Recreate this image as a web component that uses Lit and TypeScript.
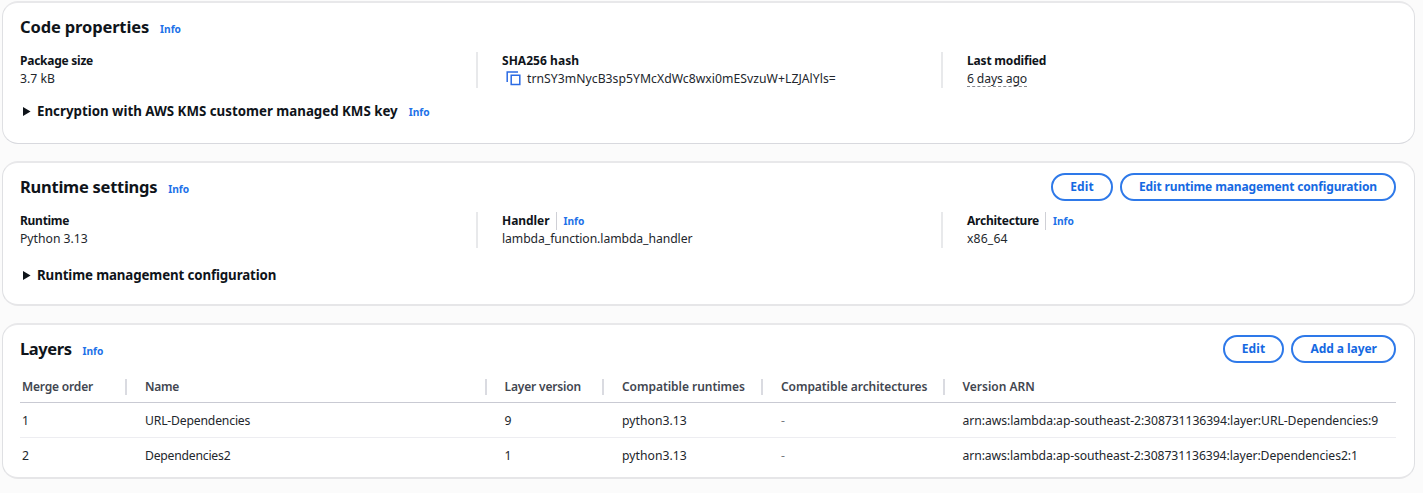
import { LitElement, html, css, nothing } from "lit";
import { customElement } from "lit/decorators.js";
import { classMap } from "lit/directives/class-map.js";
import { styleMap } from "lit/directives/style-map.js";

/** A string with the letter spacing (in px) it is set with. */
type Label = [text: string, tracking: number];

interface Field {
  label: Label;
  value: Label;
  info?: boolean;
  copy?: boolean;
  relative?: boolean;
}

interface Panel {
  id: string;
  title: Label;
  buttons: Label[];
  fields?: Field[];
  expander?: { label: Label; info?: boolean };
  table?: { head: Label[]; rows: Label[][] };
}

const EDIT: Label = ["Edit", 0.1];

const PANELS: Panel[] = [
  {
    id: "code",
    title: ["Code properties", -0.14],
    buttons: [],
    fields: [
      { label: ["Package size", -0.25], value: ["3.7 kB", 0] },
      {
        label: ["SHA256 hash", 0.04],
        value: ["trnSY3mNycB3sp5YMcXdWc8wxi0mESvzuW+LZJAlYls=", 0.04],
        copy: true,
      },
      { label: ["Last modified", -0.18], value: ["6 days ago", -0.14], relative: true },
    ],
    expander: { label: ["Encryption with AWS KMS customer managed KMS key", 0], info: true },
  },
  {
    id: "runtime",
    title: ["Runtime settings", -0.26],
    buttons: [EDIT, ["Edit runtime management configuration", -0.14]],
    fields: [
      { label: ["Runtime", -0.28], value: ["Python 3.13", 0] },
      {
        label: ["Handler", -0.05],
        value: ["lambda_function.lambda_handler", -0.07],
        info: true,
      },
      { label: ["Architecture", -0.24], value: ["x86_64", 0.15], info: true },
    ],
    expander: { label: ["Runtime management configuration", -0.12] },
  },
  {
    id: "layers",
    title: ["Layers", -0.42],
    buttons: [EDIT, ["Add a layer", -0.05]],
    table: {
      head: [
        ["Merge order", -0.18],
        ["Name", -0.25],
        ["Layer version", -0.16],
        ["Compatible runtimes", -0.04],
        ["Compatible architectures", -0.06],
        ["Version ARN", -0.02],
      ],
      rows: [
        [
          ["1", 0],
          ["URL-Dependencies", -0.18],
          ["9", 0],
          ["python3.13", 0.04],
          ["-", 0],
          ["arn:aws:lambda:ap-southeast-2:308731136394:layer:URL-Dependencies:9", -0.07],
        ],
        [
          ["2", 0],
          ["Dependencies2", -0.22],
          ["1", 0],
          ["python3.13", 0.04],
          ["-", 0],
          ["arn:aws:lambda:ap-southeast-2:308731136394:layer:Dependencies2:1", -0.08],
        ],
      ],
    },
  },
];

const tracked = ([text, tracking]: Label) =>
  html`<span style=${styleMap({ letterSpacing: `${tracking}px` })}>${text}</span>`;

const info = html`<a class="info">Info</a>`;

const copyIcon = html`<svg class="copy" width="15" height="15" viewBox="0 0 15 15" fill="none">
  <path d="M1.2 11V.9H12" />
  <path d="M5.2 4.2h8.6v9.2H5.2z" />
</svg>`;

@customElement("app-root")
export class AppRoot extends LitElement {
  static styles = css`
    :host {
      display: flex;
      flex-direction: column;
      box-sizing: border-box;
      height: 493px;
      padding: 1px 8px 0 2px;
      background: #fbfbfb;
      color: #0f141a;
      font-family: "Noto Sans", sans-serif;
      font-size: 12.2px;
      line-height: 18px;
      white-space: nowrap;
      overflow: hidden;
    }
    .panel {
      box-sizing: border-box;
      padding: 10px 18px 0 17px;
      background: #fff;
      border: solid #dfe0e3;
      border-width: 2px 1px;
      border-top-color: #e8e8ea;
      border-bottom-color: #e6e6e8;
      border-radius: 16px;
    }
    .code {
      height: 143px;
      margin-bottom: 17px;
      border-bottom: 1px solid #d8d9de;
    }
    .runtime {
      height: 145px;
      margin-bottom: 17px;
    }
    .layers {
      height: 156px;
    }
    .header {
      display: flex;
      align-items: center;
      justify-content: space-between;
      height: 28px;
    }
    .heading {
      display: flex;
      align-items: baseline;
      gap: 11px;
    }
    h2 {
      margin: 0;
      font-size: 16.5px;
      font-weight: 700;
      line-height: 28px;
    }
    .info {
      color: #2171e8;
      font-size: 10.2px;
      font-weight: 700;
    }
    .actions {
      display: flex;
      gap: 7px;
    }
    button {
      height: 28px;
      padding: 0 17.1px;
      border: 2px solid #2e79e9;
      border-radius: 14px;
      background: #fff;
      color: #1569e2;
      font: 700 12px/24px "Noto Sans", sans-serif;
    }
    .fields {
      display: grid;
      grid-template-columns: 456px 465px 1fr;
      margin-top: 11px;
    }
    .field + .field {
      padding-left: 24px;
      border-left: 2px solid #e8e9eb;
    }
    .label {
      display: flex;
      height: 18px;
      font-size: 12px;
      font-weight: 700;
    }
    .label .info {
      margin-left: 6px;
      padding-left: 7px;
      border-left: 1px solid #cfd0d6;
    }
    .value {
      display: flex;
      height: 18px;
      color: #22262c;
    }
    .copy {
      margin: 1px 6px 0 4px;
      stroke: #2b6be4;
      stroke-width: 1.5;
    }
    .relative {
      height: 16px;
      border-bottom: 1px dashed #85878d;
    }
    .expander {
      display: flex;
      align-items: baseline;
      margin-top: 13px;
      font-size: 13.3px;
      font-weight: 700;
      line-height: 20px;
    }
    .runtime .expander {
      margin-top: 17px;
    }
    .expander .info {
      margin-left: 11px;
    }
    .caret {
      width: 8px;
      height: 9px;
      margin: 0 6px 0 3px;
      fill: #0f141a;
    }
    .table {
      margin-top: 8px;
    }
    .row {
      display: grid;
      grid-template-columns: 107px 359.5px 117.5px 159px 181.5px 1fr;
      align-items: center;
      height: 35px;
      color: #22262c;
    }
    .row > * {
      padding-left: 18px;
    }
    .row > :first-child {
      padding-left: 2px;
    }
    .row:nth-child(2) {
      box-sizing: border-box;
      padding-top: 1px;
      border-bottom: 1px solid #ededf1;
    }
    .head {
      height: 31px;
      border-bottom: 1px solid #c9cad3;
      color: #424650;
      font-size: 12px;
      font-weight: 600;
    }
    .head > * {
      height: 16px;
      line-height: 16px;
      border-right: 2px solid #dadbe1;
    }
    .head > :last-child {
      border-right: 0;
    }
    .empty {
      color: #777a82;
    }
  `;

  private renderField(f: Field) {
    return html`<div class="field">
      <div class="label">${tracked(f.label)}${f.info ? info : nothing}</div>
      <div class="value">
        ${f.copy ? copyIcon : nothing}
        <div class=${classMap({ relative: !!f.relative })}>${tracked(f.value)}</div>
      </div>
    </div>`;
  }

  private renderPanel(p: Panel) {
    return html`<section class="panel ${p.id}">
      <div class="header">
        <div class="heading"><h2>${tracked(p.title)}</h2>${info}</div>
        <div class="actions">${p.buttons.map((b) => html`<button>${tracked(b)}</button>`)}</div>
      </div>
      ${p.fields ? html`<div class="fields">${p.fields.map((f) => this.renderField(f))}</div>` : nothing}
      ${p.expander
        ? html`<div class="expander">
            <svg class="caret" viewBox="0 0 8 9"><path d="M0 0l7.6 4.5L0 9z" /></svg>
            ${tracked(p.expander.label)}${p.expander.info ? info : nothing}
          </div>`
        : nothing}
      ${p.table
        ? html`<div class="table">
            <div class="row head">${p.table.head.map((c) => html`<div>${tracked(c)}</div>`)}</div>
            ${p.table.rows.map(
              (row) => html`<div class="row">
                ${row.map((c) => html`<div class=${classMap({ empty: c[0] === "-" })}>${tracked(c)}</div>`)}
              </div>`
            )}
          </div>`
        : nothing}
    </section>`;
  }

  render() {
    return PANELS.map((p) => this.renderPanel(p));
  }
}
